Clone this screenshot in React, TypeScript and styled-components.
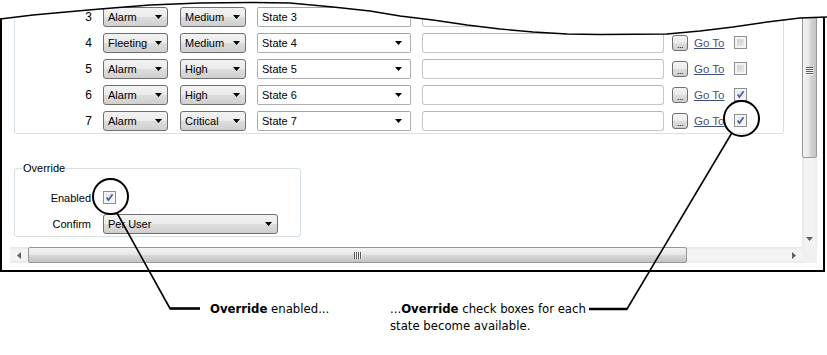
import React from 'react'
import styled, { createGlobalStyle } from 'styled-components'

const UI_FONT = `'Liberation Sans', Arial, sans-serif`
const NOTE_FONT = `'DejaVu Sans Condensed', 'Liberation Sans', sans-serif`

const GlobalStyle = createGlobalStyle`
  html, body {
    margin: 0;
    padding: 0;
    background: #fff;
  }
  body {
    font-family: ${UI_FONT};
  }
`

const Page = styled.div`
  position: relative;
  width: 827px;
  height: 355px;
  overflow: hidden;
  background: #fff;
`

const Frame = styled.div`
  box-sizing: border-box;
  width: 825px;
  height: 272px;
  border: 2px solid #000;
  border-top: none;
  padding: 0 6px 7px 8px;
  display: flex;
  flex-direction: column;
`

const Viewport = styled.div`
  display: flex;
  height: 247px;
`

const Content = styled.div`
  flex: 1;
  padding-left: 4px;
  display: flex;
  flex-direction: column;
  align-items: flex-start;
  font: 11px ${UI_FONT};
  color: #000;
`

const StatesBox = styled.div`
  box-sizing: border-box;
  width: 770px;
  border: 1px solid #d5dfe5;
  border-radius: 3px;
  padding: 5px 0 2px;
  display: flex;
  flex-direction: column;
  gap: 5px;
`

const StateRow = styled.div`
  display: flex;
  align-items: center;
  height: 21px;
`

const RowNum = styled.span`
  width: 77px;
  margin-right: 11px;
  text-align: right;
  font-size: 12px;
`

const ButtonSelect = styled.div<{ $w: number; $mr?: number }>`
  box-sizing: border-box;
  width: ${(p) => p.$w}px;
  height: 20px;
  margin-right: ${(p) => p.$mr || 0}px;
  padding: 0 5px 0 4px;
  border: 1px solid #707070;
  border-radius: 3px;
  background: linear-gradient(#f2f2f2 0%, #ebebeb 50%, #dddddd 51%, #cfcfcf 100%);
  display: flex;
  align-items: center;
  justify-content: space-between;
  white-space: nowrap;
`

const ComboBox = styled.div`
  box-sizing: border-box;
  width: 154px;
  height: 20px;
  margin-right: 11px;
  padding: 0 8px 0 4px;
  border: 1px solid #abadb3;
  border-top-color: #a0a3aa;
  border-radius: 2px;
  background: #fff;
  display: flex;
  align-items: center;
  justify-content: space-between;
`

const TextInput = styled.div`
  box-sizing: border-box;
  width: 242px;
  height: 20px;
  margin-right: 8px;
  border: 1px solid #c3c6cc;
  border-top-color: #b2b5bb;
  border-radius: 3px;
  background: #fff;
`

const DotsButton = styled.div`
  box-sizing: border-box;
  width: 16px;
  height: 16px;
  margin-right: 6px;
  border: 1px solid #707070;
  border-radius: 3px;
  background: linear-gradient(#f4f4f4 0%, #ebebeb 50%, #dddddd 51%, #cfcfcf 100%);
  display: flex;
  align-items: flex-end;
  justify-content: center;
  font-size: 9px;
  line-height: 10px;
  letter-spacing: -0.5px;
`

const GoTo = styled.span`
  width: 30px;
  margin-right: 10px;
  color: #3f4f7d;
  text-decoration: underline;
  white-space: nowrap;
  font-size: 11.5px;
`

const Box = styled.span<{ $checked?: boolean }>`
  box-sizing: border-box;
  width: 13px;
  height: 13px;
  border: 1px solid #8e8f8f;
  box-shadow: inset 0 0 0 2px #f4f4f4;
  background: ${(p) =>
    p.$checked
      ? 'linear-gradient(135deg, #dfe3ea, #f6f7f9)'
      : 'linear-gradient(135deg, #c9c9c9, #eeeeee)'};
  display: inline-flex;
  align-items: center;
  justify-content: center;
`

const OverrideBox = styled.fieldset`
  box-sizing: border-box;
  width: 287px;
  margin: 28px 0 0;
  padding: 12px 0 2px;
  border: 1px solid #d5dfe5;
  border-radius: 3px;
`

const Legend = styled.legend`
  margin-left: 7px;
  padding: 0 1px;
  font-size: 11px;
  line-height: 13px;
`

const FormGrid = styled.div`
  display: grid;
  grid-template-columns: 76px 175px;
  column-gap: 12px;
  row-gap: 5px;
  grid-auto-rows: 21px;
  align-items: center;
`

const FieldLabel = styled.span`
  text-align: right;
  font-size: 11px;
`

const VScroll = styled.div`
  width: 15px;
  display: flex;
  flex-direction: column;
  background: linear-gradient(to right, #e6e6e6, #f3f3f3 20%, #f3f3f3 80%, #eaeaea);
`

const VThumb = styled.div`
  box-sizing: border-box;
  height: 158px;
  border: 1px solid #979797;
  border-radius: 2px;
  background: linear-gradient(to right, #f3f3f3 0%, #e8e8e8 45%, #d6d6d6 55%, #c4c4c4 100%);
  display: flex;
  justify-content: center;
  padding-top: 66px;
`

const Track = styled.div`
  flex: 1;
`

const ArrowButton = styled.div<{ $size: number }>`
  flex: 0 0 ${(p) => p.$size}px;
  display: flex;
  align-items: center;
  justify-content: center;
`

const HScrollRow = styled.div`
  display: flex;
  height: 16px;
`

const HScroll = styled.div`
  flex: 1;
  display: flex;
  background: linear-gradient(#e6e6e6, #f3f3f3 20%, #f3f3f3 80%, #eaeaea);
`

const HThumb = styled.div`
  box-sizing: border-box;
  width: 659px;
  margin-left: 1px;
  border: 1px solid #979797;
  border-radius: 2px;
  background: linear-gradient(#f3f3f3 0%, #e8e8e8 45%, #d6d6d6 55%, #c4c4c4 100%);
  display: flex;
  align-items: center;
  justify-content: center;
`

const Corner = styled.div`
  width: 15px;
  background: #f0f0f0;
`

const Grip = styled.div<{ $vertical?: boolean }>`
  display: flex;
  flex-direction: ${(p) => (p.$vertical ? 'column' : 'row')};
  gap: 1px;

  & > i {
    display: block;
    width: ${(p) => (p.$vertical ? '7px' : '1px')};
    height: ${(p) => (p.$vertical ? '1px' : '7px')};
    background: #555;
    box-shadow: ${(p) => (p.$vertical ? '0 1px 0 #fff' : '1px 0 0 #fff')};
  }
`

const Captions = styled.div`
  display: flex;
  margin-top: 28px;
  padding-left: 210px;
  font: 13px/17px ${NOTE_FONT};
  color: #000;
`

const Caption = styled.div<{ $w?: number }>`
  width: ${(p) => (p.$w ? `${p.$w}px` : 'auto')};
`

const Overlay = styled.svg`
  position: absolute;
  left: 0;
  top: 0;
  pointer-events: none;
`

const DownArrow = ({ color = '#000' }: { color?: string }) => (
  <svg width="7" height="4" viewBox="0 0 7 4">
    <polygon points="0,0 7,0 3.5,4" fill={color} />
  </svg>
)

const SideArrow = ({ left }: { left?: boolean }) => (
  <svg width="4" height="7" viewBox="0 0 4 7">
    <polygon points={left ? '4,0 4,7 0,3.5' : '0,0 0,7 4,3.5'} fill="#606060" />
  </svg>
)

const Check = () => (
  <svg width="9" height="9" viewBox="0 0 9 9">
    <path d="M1.6 4.6 L3.4 7 L7.6 1.2" stroke="#4a5f98" strokeWidth="1.7" fill="none" />
  </svg>
)

const CheckBox = ({ checked }: { checked?: boolean }) => (
  <Box $checked={checked}>{checked && <Check />}</Box>
)

const rows = [
  { n: 3, type: 'Alarm', sev: 'Medium', on: false },
  { n: 4, type: 'Fleeting', sev: 'Medium', on: false },
  { n: 5, type: 'Alarm', sev: 'High', on: false },
  { n: 6, type: 'Alarm', sev: 'High', on: true },
  { n: 7, type: 'Alarm', sev: 'Critical', on: true },
]

// torn top edge of the screenshot
const wave: [number, number][] = [
  [0, 19], [33, 15], [66, 12], [100, 9], [150, 5], [200, 3], [250, 2.5],
  [290, 3], [333, 7], [370, 11], [400, 16], [433, 20], [467, 25], [500, 29],
  [533, 32], [567, 34], [600, 34.5], [667, 34], [700, 31], [733, 27],
  [767, 22], [800, 18], [827, 17],
]
const waveLine = wave.map(([x, y], i) => `${i ? 'L' : 'M'}${x},${y}`).join(' ')

const App = () => {
  return (
    <Page>
      <GlobalStyle />
      <Frame>
        <Viewport>
          <Content>
            <StatesBox>
              {rows.map((r) => (
                <StateRow key={r.n}>
                  <RowNum>{r.n}</RowNum>
                  <ButtonSelect $w={65} $mr={12}>
                    {r.type}
                    <DownArrow />
                  </ButtonSelect>
                  <ButtonSelect $w={66} $mr={11}>
                    {r.sev}
                    <DownArrow />
                  </ButtonSelect>
                  <ComboBox>
                    State {r.n}
                    {r.n !== 3 && <DownArrow />}
                  </ComboBox>
                  <TextInput />
                  <DotsButton>...</DotsButton>
                  <GoTo>Go To</GoTo>
                  <CheckBox checked={r.on} />
                </StateRow>
              ))}
            </StatesBox>

            <OverrideBox>
              <Legend>Override</Legend>
              <FormGrid>
                <FieldLabel>Enabled</FieldLabel>
                <span>
                  <CheckBox checked />
                </span>
                <FieldLabel>Confirm</FieldLabel>
                <ButtonSelect $w={175}>
                  Per User
                  <DownArrow />
                </ButtonSelect>
              </FormGrid>
            </OverrideBox>
          </Content>

          <VScroll>
            <VThumb>
              <Grip $vertical>
                <i />
                <i />
                <i />
                <i />
              </Grip>
            </VThumb>
            <Track />
            <ArrowButton $size={17}>
              <DownArrow color="#606060" />
            </ArrowButton>
          </VScroll>
        </Viewport>

        <HScrollRow>
          <HScroll>
            <ArrowButton $size={17}>
              <SideArrow left />
            </ArrowButton>
            <HThumb>
              <Grip>
                <i />
                <i />
                <i />
                <i />
              </Grip>
            </HThumb>
            <Track />
            <ArrowButton $size={17}>
              <SideArrow />
            </ArrowButton>
          </HScroll>
          <Corner />
        </HScrollRow>
      </Frame>

      <Captions>
        <Caption $w={180}>
          <b>Override</b> enabled...
        </Caption>
        <Caption>
          ...<b>Override</b> check boxes for each
          <br />
          state become available.
        </Caption>
      </Captions>

      <Overlay width="827" height="355" viewBox="0 0 827 355">
        <path d={`M0,0 ${waveLine.replace('M', 'L')} L827,0 Z`} fill="#fff" />
        <path d={waveLine} stroke="#000" strokeWidth="1.4" fill="none" />

        <circle cx="110.5" cy="196.5" r="17.5" stroke="#000" strokeWidth="2" fill="none" />
        <circle cx="741.5" cy="118.5" r="17.5" stroke="#000" strokeWidth="2" fill="none" />

        <path d="M117,213 L170,308.5" stroke="#000" strokeWidth="1.6" fill="none" />
        <path d="M169.5,308.5 L200,308.5" stroke="#000" strokeWidth="2.6" fill="none" />
        <path d="M731.5,133.5 L627,309" stroke="#000" strokeWidth="1.6" fill="none" />
        <path d="M589,309 L627.5,309" stroke="#000" strokeWidth="2.6" fill="none" />
      </Overlay>
    </Page>
  )
}

export default App
